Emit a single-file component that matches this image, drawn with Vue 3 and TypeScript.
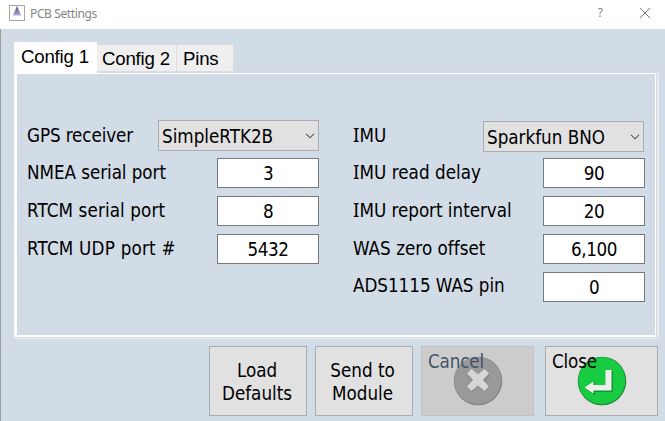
<script setup lang="ts">
import { ref } from 'vue'

interface Field {
  label: string
  value: string
  tracking: number
  select?: boolean
}

const tabs = ['Config 1', 'Config 2', 'Pins']
const active = ref(0)

const columns: Field[][] = [
  [
    { label: 'GPS receiver', value: 'SimpleRTK2B', tracking: -0.1, select: true },
    { label: 'NMEA serial port', value: '3', tracking: -0.05 },
    { label: 'RTCM serial port', value: '8', tracking: 0.12 },
    { label: 'RTCM UDP port #', value: '5432', tracking: 0.22 },
  ],
  [
    { label: 'IMU', value: 'Sparkfun BNO', tracking: 0, select: true },
    { label: 'IMU read delay', value: '90', tracking: 0.04 },
    { label: 'IMU report interval', value: '20', tracking: -0.02 },
    { label: 'WAS zero offset', value: '6,100', tracking: 0.03 },
    { label: 'ADS1115 WAS pin', value: '0', tracking: -0.03 },
  ],
]
</script>

<template>
  <div class="window">
    <header class="titlebar">
      <svg class="app-icon" width="16" height="16" viewBox="0 0 16 16">
        <defs>
          <linearGradient id="cone" x1="0" y1="0" x2="0" y2="1">
            <stop offset="0" stop-color="#4b4768" />
            <stop offset="1" stop-color="#b0acdf" />
          </linearGradient>
        </defs>
        <rect x=".5" y=".5" width="15" height="15" fill="#fff" stroke="#aaa3a6" />
        <path d="M8 1L12.200 10.500H3.800Z" fill="url(#cone)" />
      </svg>
      <span class="title">PCB Settings</span>
      <span class="help">?</span>
      <svg class="x" width="12" height="12" viewBox="0 0 12 12">
        <path d="M1 1L11 11M11 1L1 11" fill="none" stroke="#777" stroke-width="1" />
      </svg>
    </header>

    <main class="body">
      <nav class="tabs">
        <div
          v-for="(tab, i) in tabs"
          :key="tab"
          class="tab"
          :class="['tab-' + (i + 1), { active: i === active }]"
          @click="active = i"
        >{{ tab }}</div>
      </nav>

      <section class="panel">
        <div class="panel-inner">
          <div v-for="(col, c) in columns" :key="c" class="column" :class="'column-' + (c + 1)">
            <div v-for="f in col" :key="f.label" class="row" :class="{ first: f.select }">
              <span
                class="label"
                :class="{ serif: f.label.startsWith('I') }"
                :style="{ letterSpacing: f.tracking + 'px' }"
              >{{ f.label }}</span>
              <div v-if="f.select" class="select">
                <span>{{ f.value }}</span>
                <svg width="10" height="6" viewBox="0 0 10 6">
                  <path d="M1 .8L5 4.8L9 .8" fill="none" stroke="#555" stroke-width="1.1" />
                </svg>
              </div>
              <div v-else class="input"><span>{{ f.value }}</span></div>
            </div>
          </div>
        </div>
      </section>

      <footer class="actions">
        <div class="button small"><span>Load<br />Defaults</span></div>
        <div class="button small send"><span>Send to<br />Module</span></div>
        <div class="button large disabled">
          <svg width="50" height="50" viewBox="0 0 50 50">
            <circle cx="25" cy="25" r="24.3" fill="#858585" />
            <circle cx="24.7" cy="24.6" r="23.4" fill="#999" />
            <path d="M19 14L25 19L31 14L37 20L32 25L37 31L32 36L25 31L19 36L14 31L19 25L14 20Z" fill="#777" opacity=".5" />
            <path d="M18.500 13L25 18.500L31.500 13L36 17.500L30 24L36 30.500L31.500 35L25 29.500L18.500 35L14 30.500L20 24L14 17.500Z" fill="#d6d6d6" />
          </svg>
          <span class="caption">Cancel</span>
        </div>
        <div class="button large">
          <svg width="50" height="50" viewBox="0 0 50 50">
            <circle cx="25" cy="25" r="24.3" fill="#178f35" />
            <circle cx="24.8" cy="24.6" r="23.4" fill="#18cb42" />
            <path d="M29 14.500H36V36H18V39.500L8.500 32L18 25V29H29Z" fill="#0b8128" opacity=".65" />
            <path d="M28.500 14H34.500V34.500H16.500V37.500L7.500 31.500L16.500 25.500V29H28.500Z" fill="#eee" />
          </svg>
          <span class="caption">Close</span>
        </div>
      </footer>
    </main>
  </div>
</template>

<style>
body {
  overflow: hidden;
}
</style>

<style scoped>
.window {
  box-sizing: border-box;
  width: 665px;
  height: 421px;
  background: #d2dce6;
  color: #000;
  font: 18.67px/23px "DejaVu Sans Condensed", "Noto Sans", sans-serif;
  font-stretch: condensed;
  white-space: nowrap;
}
.titlebar {
  height: 29px;
  background: #fff;
  display: flex;
  align-items: flex-start;
  color: #858585;
  font: 12px/16px "Noto Sans", sans-serif;
  box-sizing: border-box;
  padding: 5px 14px 0 9px;
}
.title {
  margin: 1px 0 0 5px;
  flex: 1;
  letter-spacing: -.38px;
}
.help {
  margin-right: 36px;
}
.x {
  margin-top: 2px;
}
.body {
  box-sizing: border-box;
  height: 392px;
  border-left: 1px solid #9b9fa5;
  padding: 13px 6px 0 13px;
}
.tabs {
  display: flex;
  align-items: flex-end;
  height: 31px;
  font: 18.67px/28px "Liberation Sans", sans-serif;
  letter-spacing: -.2px;
}
.tab {
  box-sizing: border-box;
  height: 28px;
  margin-bottom: 1px;
  background: #efefef;
  border: 1px solid #dcdcdc;
  border-left: 0;
  padding-left: 5px;
}
.tab.active {
  height: 31px;
  margin-bottom: 0;
  background: #fff;
  border: 0;
  padding-left: 7px;
  line-height: 29px;
}
.tab-1 { width: 83px; }
.tab-2 { width: 80px; }
.tab-3 { width: 57px; padding-left: 6px; }
.panel {
  box-sizing: border-box;
  width: 645px;
  height: 266px;
  border-right: 2px solid #ececf0;
  border-bottom: 1px solid #ececf0;
  padding: 0 1px 1px 0;
}
.panel-inner {
  box-sizing: border-box;
  height: 264px;
  border: solid #fff;
  border-width: 1px 1px 2px 3px;
  display: flex;
  padding: 46px 0 0 10px;
}
.column-1 { width: 292px; }
.column-2 { width: 292px; margin-left: 34px; }
.row {
  display: flex;
  justify-content: space-between;
  align-items: flex-start;
  height: 38px;
}
.label {
  line-height: 30px;
}
/* capital I with crossbars */
.label.serif::first-letter {
  font-family: "Noto Sans", sans-serif;
  font-size: 19px;
  line-height: 20px;
}
.row:nth-child(5) .label { margin-top: -1px; }
.row.first .label { margin-top: 1px; }
.column-2 .select { margin: 1px 1px 0 0; }
.select {
  box-sizing: border-box;
  width: 161px;
  height: 31px;
  border: 1px solid #a9adb1;
  background: #e1e1e1;
  display: flex;
  align-items: center;
  justify-content: space-between;
  padding: 1px 3px 0;
}
.input {
  box-sizing: border-box;
  width: 102px;
  height: 30px;
  border: 1px solid #777b80;
  background: #fff;
  text-align: center;
  line-height: 29px;
  letter-spacing: -.45px;
}
.actions {
  display: flex;
  margin: 7px 0 0 195px;
}
.button {
  box-sizing: border-box;
  flex: none;
  height: 70px;
  border: 1px solid #a9adb0;
  background: #e1e1e1;
  position: relative;
  display: flex;
  align-items: center;
  justify-content: center;
  text-align: center;
}
.small { width: 98px; margin-right: 8px; padding: 2px 2px 0 0; }
.send { padding-right: 3px; }
.large { width: 113px; margin-right: 11px; }
.disabled {
  background: #ccc;
  border-color: #bfc1c3;
  color: #44546a;
}
.caption {
  position: absolute;
  left: 6px;
  top: 3px;
  letter-spacing: -.15px;
}
</style>
